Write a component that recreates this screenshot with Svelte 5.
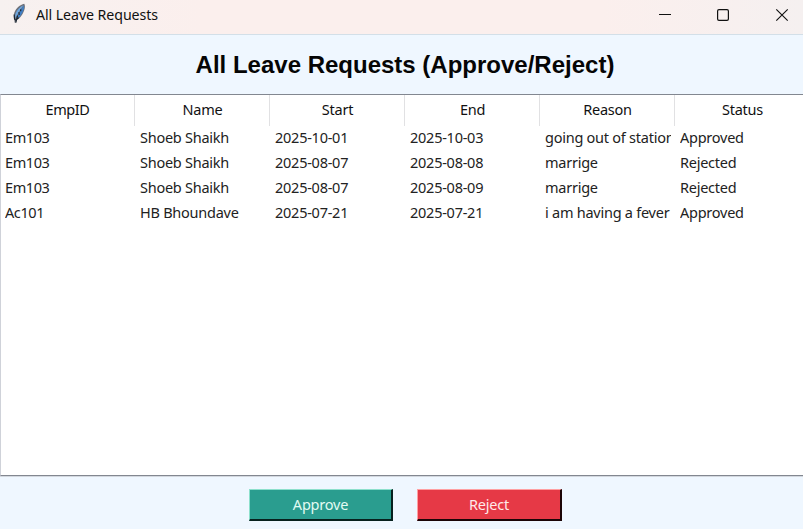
<script>
  const columns = ['EmpID', 'Name', 'Start', 'End', 'Reason', 'Status'];
  const rows = [
    ['Em103', 'Shoeb Shaikh', '2025-10-01', '2025-10-03', 'going out of station', 'Approved'],
    ['Em103', 'Shoeb Shaikh', '2025-08-07', '2025-08-08', 'marrige', 'Rejected'],
    ['Em103', 'Shoeb Shaikh', '2025-08-07', '2025-08-09', 'marrige', 'Rejected'],
    ['Ac101', 'HB Bhoundave', '2025-07-21', '2025-07-21', 'i am having a fever', 'Approved']
  ];
</script>

<main class="window">
  <header class="titlebar">
    <svg class="feather" width="16" height="22" viewBox="0 0 16 22">
      <path d="M13.2 .8C9 1.8 5.2 5 3.5 9.2c-1 2.7-1 5.2-.2 7.2l.4 3.4 1.4-.2.4-2.3c3.5-1.6 6.8-6.3 8.1-11.2.5-2.1.4-4.2-.4-5.3z" fill="#6d7078" />
      <path d="M12.5 2.2C9.2 3.5 6 6.8 4.7 10.2c-.7 2-.7 3.6-.2 4.8 1.7-3.1 3.9-7.5 8-12.8z" fill="#6ca5df" />
      <path d="M13 2.3c.5 3.7-2 9.4-5.2 12.2l-2.3 1.3C7 12 9.4 7.2 13 2.3z" fill="#3f7fc6" />
      <path d="M9.8 6.2l-.1 2M8 9l.2 3M6.6 12.5L4.8 19.6M3.2 11.5l.3 4.6 1.1 1 3.2-2.5" fill="none" stroke="#17222e" stroke-width="1.1" />
    </svg>
    <span class="caption">All Leave Requests</span>
    <div class="controls">
      <svg width="58" height="34" viewBox="0 0 58 34"><path d="M14 14.5h12" stroke="#111" /></svg>
      <svg width="58" height="34" viewBox="0 0 58 34"><rect x="14.6" y="9.6" width="10.8" height="10.8" rx="1.4" fill="none" stroke="#111" stroke-width="1.2" /></svg>
      <svg width="42" height="34" viewBox="0 0 42 34"><path d="M15.3 9.3l11.4 11.4M26.7 9.3L15.3 20.7" stroke="#111" stroke-width="1.15" /></svg>
    </div>
  </header>

  <h1>All Leave Requests (Approve/Reject)</h1>

  <section class="table">
    <div class="row head">
      {#each columns as column}
        <div class="cell">{column}</div>
      {/each}
    </div>
    {#each rows as row}
      <div class="row">
        {#each row as value}
          <div class="cell"><div class="clip">{value}</div></div>
        {/each}
      </div>
    {/each}
  </section>

  <footer>
    <button class="approve">Approve</button>
    <button class="reject">Reject</button>
  </footer>
</main>

<style>
  .window {
    width: 803px;
    height: 529px;
    display: flex;
    flex-direction: column;
    overflow: hidden;
    background: #eff7ff;
    font-family: "Noto Sans", "Open Sans", sans-serif;
    font-size: 14.5px;
    letter-spacing: -0.25px;
    color: #222;
  }
  .titlebar {
    box-sizing: border-box;
    height: 35px;
    flex: none;
    display: flex;
    background: linear-gradient(90deg, #f7f1f0 0, #fbefed 25%, #fbefed 75%, #f5f0f0 100%);
    border-bottom: 1px solid #d3dfe8;
  }
  .feather { margin: 3px 0 0 11px; }
  .caption {
    margin-left: 9px;
    line-height: 30px;
    font-size: 14.2px;
    letter-spacing: -0.08px;
    color: #111;
    white-space: nowrap;
  }
  .controls { display: flex; margin-left: auto; }
  h1 {
    margin: 0;
    height: 59px;
    flex: none;
    padding-left: 7px;
    text-align: center;
    font: bold 24px/59px "Liberation Sans", Arial, sans-serif;
    letter-spacing: 0;
    color: #050505;
    white-space: nowrap;
  }
  .table {
    box-sizing: border-box;
    height: 382px;
    flex: none;
    background: #fff;
    border-top: 1px solid #828790;
    border-bottom: 1px solid #828790;
    border-left: 1px solid #cfd2d9;
    box-shadow: 0 1px #d3d8df;
  }
  .row {
    display: grid;
    grid-template-columns: 134px repeat(5, 135px);
    height: 25px;
    line-height: 23px;
  }
  .cell { padding: 0 4px 0 5px; overflow: hidden; }
  .cell:first-child { padding-left: 4px; letter-spacing: -0.4px; }
  .clip { overflow: hidden; white-space: nowrap; }
  .head {
    height: 31px;
    line-height: 29px;
    color: #111;
    text-align: center;
  }
  .head .cell {
    box-sizing: border-box;
    padding: 0 0 0 1px;
    height: 31px;
    border-right: 1px solid #e1e1e3;
  }
  .head .cell:first-child { padding-left: 0; }
  footer { flex: 1; display: flex; gap: 24px; padding: 13px 0 0 249px; }
  button {
    box-sizing: border-box;
    width: 144px;
    height: 32px;
    padding: 0 0 1px;
    border: 1px solid #111;
    border-width: 1px 2px 2px 1px;
    font: inherit;
    letter-spacing: -0.22px;
    line-height: 27px;
  }
  .approve { background: #2a9d8f; border-color: #8de0cc #07211e #07211e #8de0cc; color: #e1fbf3; }
  .reject { width: 145px; background: #e63946; border-color: #ffa0a2 #1b0507 #1b0507 #ffa0a2; color: #ffe9e9; }
</style>
